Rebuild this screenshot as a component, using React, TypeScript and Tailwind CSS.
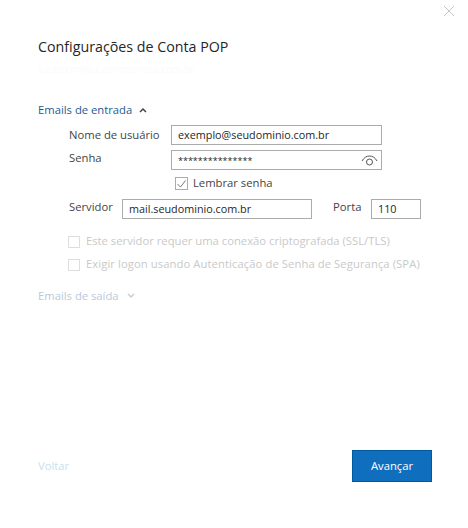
import React from "react";

const inputBox = "h-5 border border-[#ababab] bg-white flex items-center pl-[6px] text-[10.8px] text-[#262626]";

const App: React.FC = () => {
    return (
        <div className="w-[468px] h-[528px] bg-white flex flex-col font-['Open_Sans','Noto_Sans',sans-serif] text-[11.25px] text-[#444444]">
            <div className="h-[37px] flex justify-end pt-[6px] pr-[14px]">
                <svg width="10" height="10" viewBox="0 0 10 10" fill="none" stroke="#c4c4c4" strokeWidth="1">
                    <path d="M0 0l10 10M10 0L0 10" />
                </svg>
            </div>

            <div className="pl-[38px]">
                <h1 className="h-[20px] leading-[20px] text-[14.25px] text-[#262626]">Configurações de Conta POP</h1>
                <p className="h-[18px] mt-[3px] leading-[18px] text-[10px] text-[#fbfbfb]">lucasrcm@lucasrcmoreira.com.br</p>
            </div>

            <div className="mt-[23px] pl-[38px] flex items-center gap-[7px] h-[18px] text-[#1c5a94]">
                <span>Emails de entrada</span>
                <svg width="8" height="6" viewBox="0 0 8 6" fill="none" stroke="#444444" strokeWidth="1.5">
                    <path d="M1 5l3-3 3 3" />
                </svg>
            </div>

            <div className="mt-[6px] pl-[69px] flex items-center h-5">
                <span className="w-[102px]">Nome de usuário</span>
                <div className={`${inputBox} w-[211px]`}>exemplo@seudominio.com.br</div>
            </div>

            <div className="mt-[5px] pl-[69px] flex items-center h-5">
                <span className="w-[102px] -mt-[3px]">Senha</span>
                <div className={`${inputBox} w-[211px] justify-between pr-[3px]`}>
                    <span className="text-[9px] leading-none">***************</span>
                    <svg width="17" height="11" viewBox="0 0 17 11" fill="none" stroke="#555555" strokeWidth="1">
                        <path d="M1 6C3 2.500 5.500 1 8.500 1s5.500 1.500 7.500 5" />
                        <circle cx="8.500" cy="7" r="3" />
                    </svg>
                </div>
            </div>

            <div className="mt-[7px] pl-[175px] flex items-center gap-[5px] h-[13px]">
                <div className="w-[13px] h-[13px] border border-[#ababab] flex items-center justify-center">
                    <svg width="9" height="8" viewBox="0 0 9 8" fill="none" stroke="#777777" strokeWidth="1">
                        <path d="M0.500 4l3 3 5-6.500" />
                    </svg>
                </div>
                <span>Lembrar senha</span>
            </div>

            <div className="mt-[9px] pl-[69px] flex items-center h-5">
                <span className="w-[53px] -mt-[3px]">Servidor</span>
                <div className={`${inputBox} w-[190px]`}>mail.seudominio.com.br</div>
                <span className="ml-[21px] w-[38px] -mt-[3px]">Porta</span>
                <div className={`${inputBox} w-[50px]`}>110</div>
            </div>

            <div className="mt-[16px] pl-[68px] flex items-center gap-[6px] h-[13px] text-[#c9c9c9]">
                <div className="w-[12px] h-[12px] border border-[#dedede]" />
                <span>Este servidor requer uma conexão criptografada (SSL/TLS)</span>
            </div>
            <div className="mt-[10px] pl-[68px] flex items-center gap-[6px] h-[13px] text-[#c9c9c9]">
                <div className="w-[12px] h-[12px] border border-[#dedede]" />
                <span className="tracking-[0.08px]">Exigir logon usando Autenticação de Senha de Segurança (SPA)</span>
            </div>

            <div className="mt-[16px] pl-[38px] flex items-center gap-[8px] h-[18px] text-[#b7cadb]">
                <span>Emails de saída</span>
                <svg width="8" height="6" viewBox="0 0 8 6" fill="none" stroke="#c4cfd9" strokeWidth="1.5">
                    <path d="M1 1l3 3 3-3" />
                </svg>
            </div>

            <div className="mt-auto mb-[46px] pl-[38px] pr-[36px] flex items-center justify-between">
                <span className="text-[#c7dff2]">Voltar</span>
                <button className="w-[80px] h-[32px] bg-[#106ebe] border border-[#005a9e] text-white text-[11.25px]">Avançar</button>
            </div>
        </div>
    );
};

export default App;
